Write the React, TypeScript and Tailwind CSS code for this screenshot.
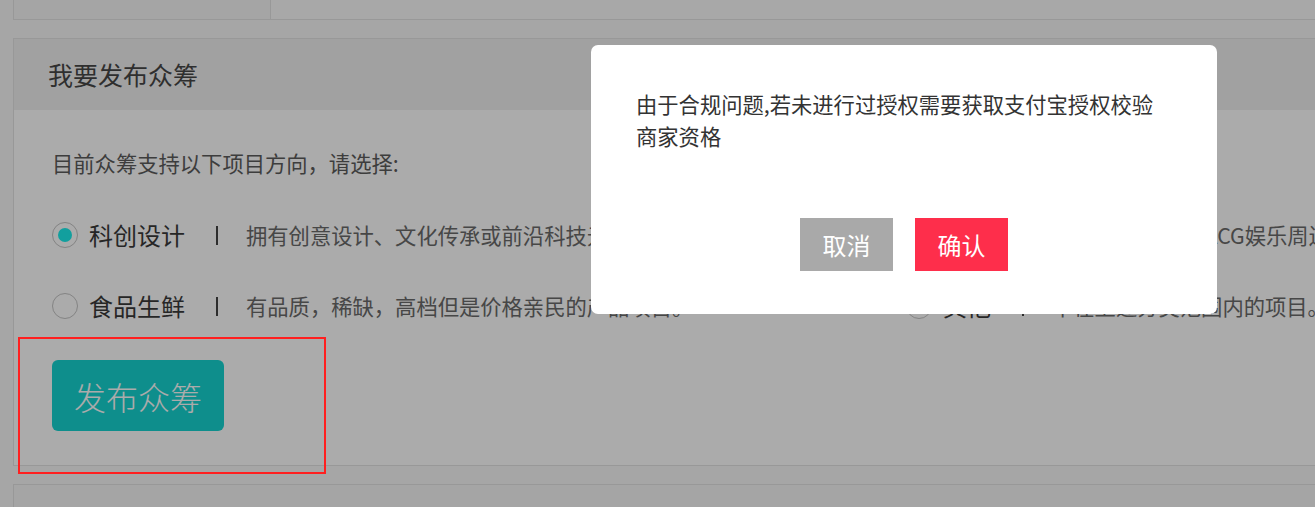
import React from "react";

const cjk = "font-['Noto_Sans_CJK_SC','Noto_Sans',sans-serif]";

interface Direction {
  label: string;
  desc: string;
  checked?: boolean;
}

const leftCol: Direction[] = [
  { label: "科创设计", desc: "拥有创意设计、文化传承或前沿科技元素的产品项目。", checked: true },
  { label: "食品生鲜", desc: "有品质，稀缺，高档但是价格亲民的产品项目。" },
];

const rightCol: Direction[] = [
  { label: "动漫游戏", desc: "原创动漫、ACG娱乐周边的项目。" },
  { label: "其他", desc: "不在上述分类范围内的项目。" },
];

function Radio({ checked }: { checked?: boolean }) {
  return (
    <span className="flex h-[26px] w-[26px] shrink-0 items-center justify-center rounded-full border-[1.5px] border-[#c4c4c4] bg-white">
      {checked && <span className="h-[14px] w-[14px] rounded-full bg-[#1ceeec]" />}
    </span>
  );
}

function DirectionRow({ item }: { item: Direction }) {
  return (
    <div className="flex h-[40px] items-center whitespace-nowrap">
      <Radio checked={item.checked} />
      <span className="ml-[11px] text-[24px] leading-[40px] text-[#3a3a3a]">{item.label}</span>
      <span className="ml-[31px] h-[19px] w-[2px] bg-[#444]" />
      <span className="ml-[28px] text-[21.3px] leading-[40px] text-[#6a6a6a]">{item.desc}</span>
    </div>
  );
}

export default function App() {
  return (
    <div className={`relative h-[507px] w-full overflow-hidden bg-[#f8f8f8] ${cjk}`}>
      <div className="w-[1400px] pl-[13px]">
        {/* previous panel, only its lower edge shows */}
        <div className="flex h-[20px] border-x border-b border-[#e3e3e3] bg-[#fbfbfb]">
          <div className="w-[257px] border-r border-[#e3e3e3] bg-[#f6f6f6]" />
          <div className="flex-1" />
        </div>

        {/* publish panel */}
        <div className="mt-[18px] border border-[#e3e3e3] bg-white">
          <div className="flex h-[71px] items-center bg-[#f1f1f1] pl-[34px] text-[25px] text-[#474747]">
            我要发布众筹
          </div>
          <div className="pb-[34px] pl-[38px]">
            <p className="mt-[37px] text-[21.3px] leading-[32px] text-[#5c5c5c]">
              目前众筹支持以下项目方向，请选择:
            </p>
            <div className="mt-[36px] flex">
              <div className="flex w-[854px] shrink-0 flex-col gap-[31px] overflow-hidden">
                {leftCol.map((d) => (
                  <DirectionRow key={d.label} item={d} />
                ))}
              </div>
              <div className="flex min-w-0 flex-col gap-[31px]">
                {rightCol.map((d) => (
                  <DirectionRow key={d.label} item={d} />
                ))}
              </div>
            </div>
            <button className="mt-[34px] flex h-[71px] w-[172px] items-center justify-center rounded-[6px] bg-[#15d4d1] text-[32px] font-light text-white">
              发布众筹
            </button>
          </div>
        </div>

        {/* next panel */}
        <div className="mt-[18px] h-[40px] border border-[#e3e3e3] bg-[#f6f6f6]" />
      </div>

      {/* dialog backdrop */}
      <div className="absolute inset-0 bg-black/[0.33]" />

      {/* confirm dialog */}
      <div className="absolute left-[591px] top-[45px] flex h-[269px] w-[626px] flex-col rounded-[7px] bg-white px-[45px] pt-[43px]">
        <p className="text-[21.3px] leading-[32px] text-[#333]">
          由于合规问题,若未进行过授权需要获取支付宝授权校验商家资格
        </p>
        <div className="mt-[66px] flex justify-center gap-[22px]">
          <button className="h-[53px] w-[93px] bg-[#a9a9a9] text-[24px] text-white">取消</button>
          <button className="h-[53px] w-[93px] bg-[#fe2e4b] text-[24px] text-white">确认</button>
        </div>
      </div>

      {/* highlight frame */}
      <div className="absolute left-[18px] top-[337px] h-[137px] w-[308px] border-2 border-[#ff1f1f]" />
    </div>
  );
}
